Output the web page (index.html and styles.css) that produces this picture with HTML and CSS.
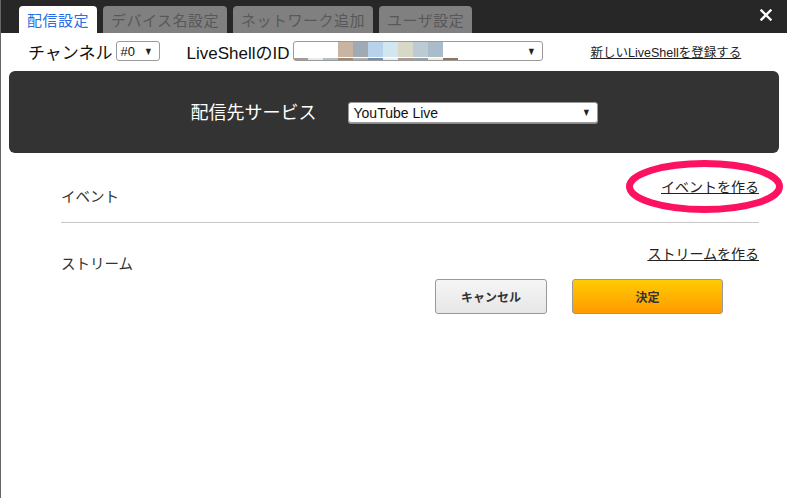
FILE: index.html
```html
<!DOCTYPE html>
<html lang="ja">
  <head>
    <meta charset="UTF-8" />
    <title>配信設定</title>
    <link rel="stylesheet" href="styles.css">
  </head>
  <body>
    <div class="window">
      <!-- タブ -->
      <header class="titlebar">
        <div class="tab active">配信設定</div>
        <div class="tab">デバイス名設定</div>
        <div class="tab">ネットワーク追加</div>
        <div class="tab">ユーザ設定</div>
        <a class="close" href="#">
          <svg width="12" height="12" viewBox="0 0 12 12">
            <path d="M1.5 1.5 L10.5 10.5 M10.5 1.5 L1.5 10.5" stroke="#fff" stroke-width="2.4" stroke-linecap="square" />
          </svg>
        </a>
      </header>

      <!-- LiveShell選択 -->
      <div class="shellbar">
        <span class="label">チャンネル</span>
        <div class="select channel"><span>#0</span><i>▼</i></div>
        <span class="label idlabel">LiveShellのID</span>
        <div class="select shellid"><span class="idmask"></span><i>▼</i></div>
        <a class="newshell" href="#">新しいLiveShellを登録する</a>
      </div>

      <!-- 配信先 -->
      <div class="service">
        <span class="service-label">配信先サービス</span>
        <div class="select youtube"><span>YouTube Live</span><i>▼</i></div>
      </div>

      <main class="content">
        <div class="row event">
          <span class="row-label">イベント</span>
          <a class="row-link" href="#">イベントを作る</a>
        </div>
        <div class="row stream">
          <span class="row-label">ストリーム</span>
          <a class="row-link" href="#">ストリームを作る</a>
        </div>
        <div class="actions">
          <button class="btn cancel">キャンセル</button>
          <button class="btn ok">決定</button>
        </div>
      </main>

      <!-- 注目マーク -->
      <svg class="mark" width="157" height="53" viewBox="0 0 157 53">
        <ellipse cx="78.5" cy="26.5" rx="75" ry="23" fill="none" stroke="#fd1262" stroke-width="7" />
      </svg>
    </div>
  </body>
</html>
```

FILE: styles.css
```css
* {
  margin: 0;
  padding: 0;
  box-sizing: border-box;
}
body {
  background: #fff;
  font-family: "Liberation Sans", "Noto Sans CJK JP", sans-serif;
  color: #222;
}
a {
  color: #222;
}

.window {
  position: relative;
  width: 787px;
  height: 498px;
  border-left: 1px solid #666;
  overflow: hidden;
}

/* タブ */
.titlebar {
  height: 33px;
  background: #272727;
  padding-left: 18px;

  display: flex;
  align-items: flex-end;
  gap: 6px;
}
.tab {
  height: 27px;
  line-height: 27px;
  padding: 0 8px;
  border-radius: 4px 4px 0 0;
  background: #808080;
  color: #585858;
  font: 15px/27px "Noto Sans CJK JP", sans-serif;
  letter-spacing: 0.5px;
  white-space: nowrap;
}
.tab.active {
  background: #fff;
  color: #2a6ee6;
}
.close {
  align-self: flex-start;
  margin: 9px 15px 0 auto;
  width: 12px;
  height: 12px;
  display: flex;
}

/* LiveShell */
.shellbar {
  height: 36px;
  padding-left: 27px;

  display: flex;
  align-items: center;
}
.label {
  font-size: 17px;
  color: #111;
  white-space: nowrap;
}
.idlabel {
  margin-left: 27px;
}
.select {
  height: 20px;
  border: 1px solid #9a9a9a;
  border-radius: 3px;
  background: #fff;
  font-size: 13px;
  color: #111;
  padding: 0 5px 0 4px;

  display: flex;
  align-items: center;
  justify-content: space-between;
}
.select i {
  font-style: normal;
  font-size: 11px;
  line-height: 1;
  color: #222;
  transform: scaleX(0.8);
}
.channel {
  width: 44px;
  margin-left: 3px;
}
.shellid {
  width: 250px;
  margin-left: 3px;
  padding: 0 5px 0 0;
  align-items: stretch;
}
.shellid i {
  display: flex;
  align-items: center;
}
.idmask {
  width: 165px;
  background:
    linear-gradient(to right, transparent 0 44px, #c8b4a0 44px 59px, #a0aab4 59px 74px, #b8d2ea 74px 89px,
      #d2e6f0 89px 104px, #d8d8c8 104px 119px, #bccad4 119px 134px, #a8bccc 134px 149px, transparent 149px) top / 100% 15px no-repeat,
    linear-gradient(to right, #a89c94 0 14px, #e8ece8 14px 29px, #b4c0c8 29px 44px, #a8886c 44px 59px, #b0b0a8 59px 74px,
      #7890b0 74px 89px, #e8f0f4 89px 104px, #b09c8c 104px 119px, #98a4ac 119px 134px, #f0ecd8 134px 149px,
      #907860 149px 164px, transparent 164px) bottom / 100% 2px no-repeat;
}
.newshell {
  margin-left: 48px;
  font-size: 12.5px;
  white-space: nowrap;
}

/* 配信先 */
.service {
  height: 82px;
  margin: 2px 8px 0 8px;
  background: #333;
  border-radius: 6px;

  display: flex;
  align-items: center;
  justify-content: center;
  gap: 31px;
}
.service-label {
  color: #fff;
  font: 18px "Noto Sans CJK JP", sans-serif;
  margin-top: -2px;
}
.youtube {
  width: 250px;
  height: 21px;
  font-size: 14px;
  padding-left: 5px;
  box-shadow: 0 1px 0 #8a8a8a;
  margin-top: 1px;
}

/* イベント・ストリーム */
.content {
  padding: 0 28px 0 60px;
}
.row {
  display: flex;
  justify-content: space-between;
  align-items: flex-start;
}
.row-label {
  font: 14.5px/20px "Noto Sans CJK JP", sans-serif;
  color: #333;
}
.row-link {
  font: 14px/20px "Noto Sans CJK JP", sans-serif;
  color: #222;
}
.event {
  height: 70px;
  border-bottom: 1px solid #c8c8c8;
}
.event .row-label {
  margin-top: 33px;
}
.event .row-link {
  margin-top: 23px;
}
.stream {
  height: 56px;
}
.stream .row-label {
  margin-top: 30px;
}
.stream .row-link {
  margin-top: 20px;
}

.actions {
  padding-right: 36px;
  display: flex;
  justify-content: flex-end;
  gap: 25px;
}
.btn {
  height: 35px;
  border: 1px solid #999;
  border-radius: 3px;
  font: bold 12px "Noto Sans CJK JP", sans-serif;
  color: #333;
}
.cancel {
  width: 112px;
  background: linear-gradient(#f6f6f6, #e6e6e6);
}
.ok {
  width: 151px;
  background: linear-gradient(#ffcb00, #ff9a00);
}

.mark {
  position: absolute;
  left: 625px;
  top: 160px;
}
```
